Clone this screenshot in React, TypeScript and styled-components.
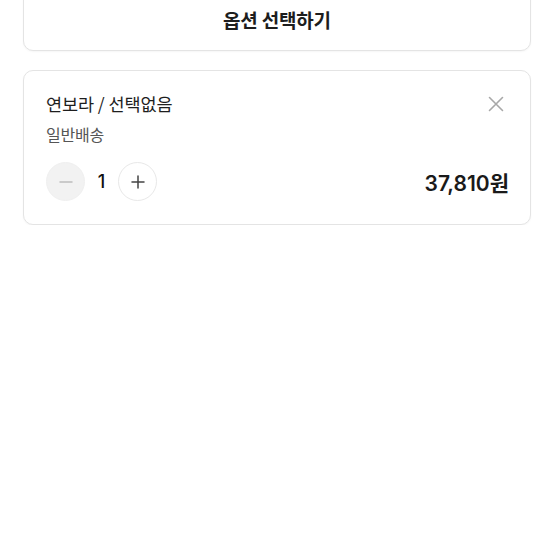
import React from "react";
import styled, { createGlobalStyle } from "styled-components";

const Global = createGlobalStyle`
  html, body { margin: 0; padding: 0; background: #fff; }
  body { font-family: "Noto Sans CJK KR", "Noto Sans", sans-serif; color: #222; }
`;

const Page = styled.div`
  display: flex;
  flex-direction: column;
  gap: 19px;
  padding: 0 24px 0 23px;
  margin-top: -13px;
`;

const Card = styled.div`
  border: 1px solid #e4e4e4;
  border-radius: 10px;
  background: #fff;
  box-shadow: 0 1px 2px rgba(0, 0, 0, 0.04);
`;

const SelectButton = styled(Card)`
  height: 62px;
  display: flex;
  align-items: center;
  justify-content: center;
  font-size: 19px;
  font-weight: 700;
  color: #1d1d1d;
  letter-spacing: -0.2px;
`;

const OptionCard = styled(Card)`
  padding: 20px 22px 23px 22px;
  display: flex;
  flex-direction: column;
`;

const HeaderRow = styled.div`
  display: flex;
  justify-content: space-between;
  align-items: center;
`;

const Title = styled.div`
  font-size: 17.5px;
  font-weight: 400;
  color: #1e1e1e;
  letter-spacing: -0.1px;
  line-height: 26px;
`;

const Close = styled.button`
  border: none;
  background: none;
  padding: 0;
  width: 18px;
  height: 18px;
  display: flex;
  align-items: center;
  justify-content: center;
  margin-right: 3px;
`;

const Shipping = styled.div`
  font-size: 16px;
  color: #555;
  margin-top: 6px;
  line-height: 22px;
  letter-spacing: -0.2px;
`;

const BottomRow = styled.div`
  display: flex;
  justify-content: space-between;
  align-items: center;
  margin-top: 17px;
`;

const Stepper = styled.div`
  display: flex;
  align-items: center;
`;

const Circle = styled.button<{ $disabled?: boolean }>`
  width: 39px;
  height: 39px;
  border-radius: 50%;
  border: 1px solid ${(p) => (p.$disabled ? "#f0f0f0" : "#e8e8e8")};
  background: ${(p) => (p.$disabled ? "#f2f2f2" : "#fff")};
  display: flex;
  align-items: center;
  justify-content: center;
  padding: 0;
`;

const Qty = styled.div`
  width: 33px;
  text-align: center;
  font-family: "Inter", "Noto Sans", sans-serif;
  font-size: 18px;
  font-weight: 500;
  color: #111;
`;

const Price = styled.div`
  font-family: "Inter", "Noto Sans CJK KR", sans-serif;
  font-size: 21px;
  font-weight: 600;
  color: #1a1a1a;
  letter-spacing: 0;
  margin-right: -1px;
`;

export default function App() {
  return (
    <>
      <Global />
      <Page>
        <SelectButton>옵션 선택하기</SelectButton>
        <OptionCard>
          <HeaderRow>
            <Title>연보라 / 선택없음</Title>
            <Close aria-label="삭제">
              <svg width="16" height="16" viewBox="0 0 16 16">
                <path d="M1.5 1.5 L14.5 14.5 M14.5 1.5 L1.5 14.5" stroke="#a8a8a8" strokeWidth="1.6" strokeLinecap="round" />
              </svg>
            </Close>
          </HeaderRow>
          <Shipping>일반배송</Shipping>
          <BottomRow>
            <Stepper>
              <Circle $disabled aria-label="minus">
                <svg width="14" height="14" viewBox="0 0 14 14">
                  <path d="M1 7 H13" stroke="#bdbdbd" strokeWidth="1.5" strokeLinecap="round" />
                </svg>
              </Circle>
              <Qty>1</Qty>
              <Circle aria-label="plus">
                <svg width="14" height="14" viewBox="0 0 14 14">
                  <path d="M1 7 H13 M7 1 V13" stroke="#444" strokeWidth="1.5" strokeLinecap="round" />
                </svg>
              </Circle>
            </Stepper>
            <Price>37,810원</Price>
          </BottomRow>
        </OptionCard>
      </Page>
    </>
  );
}
